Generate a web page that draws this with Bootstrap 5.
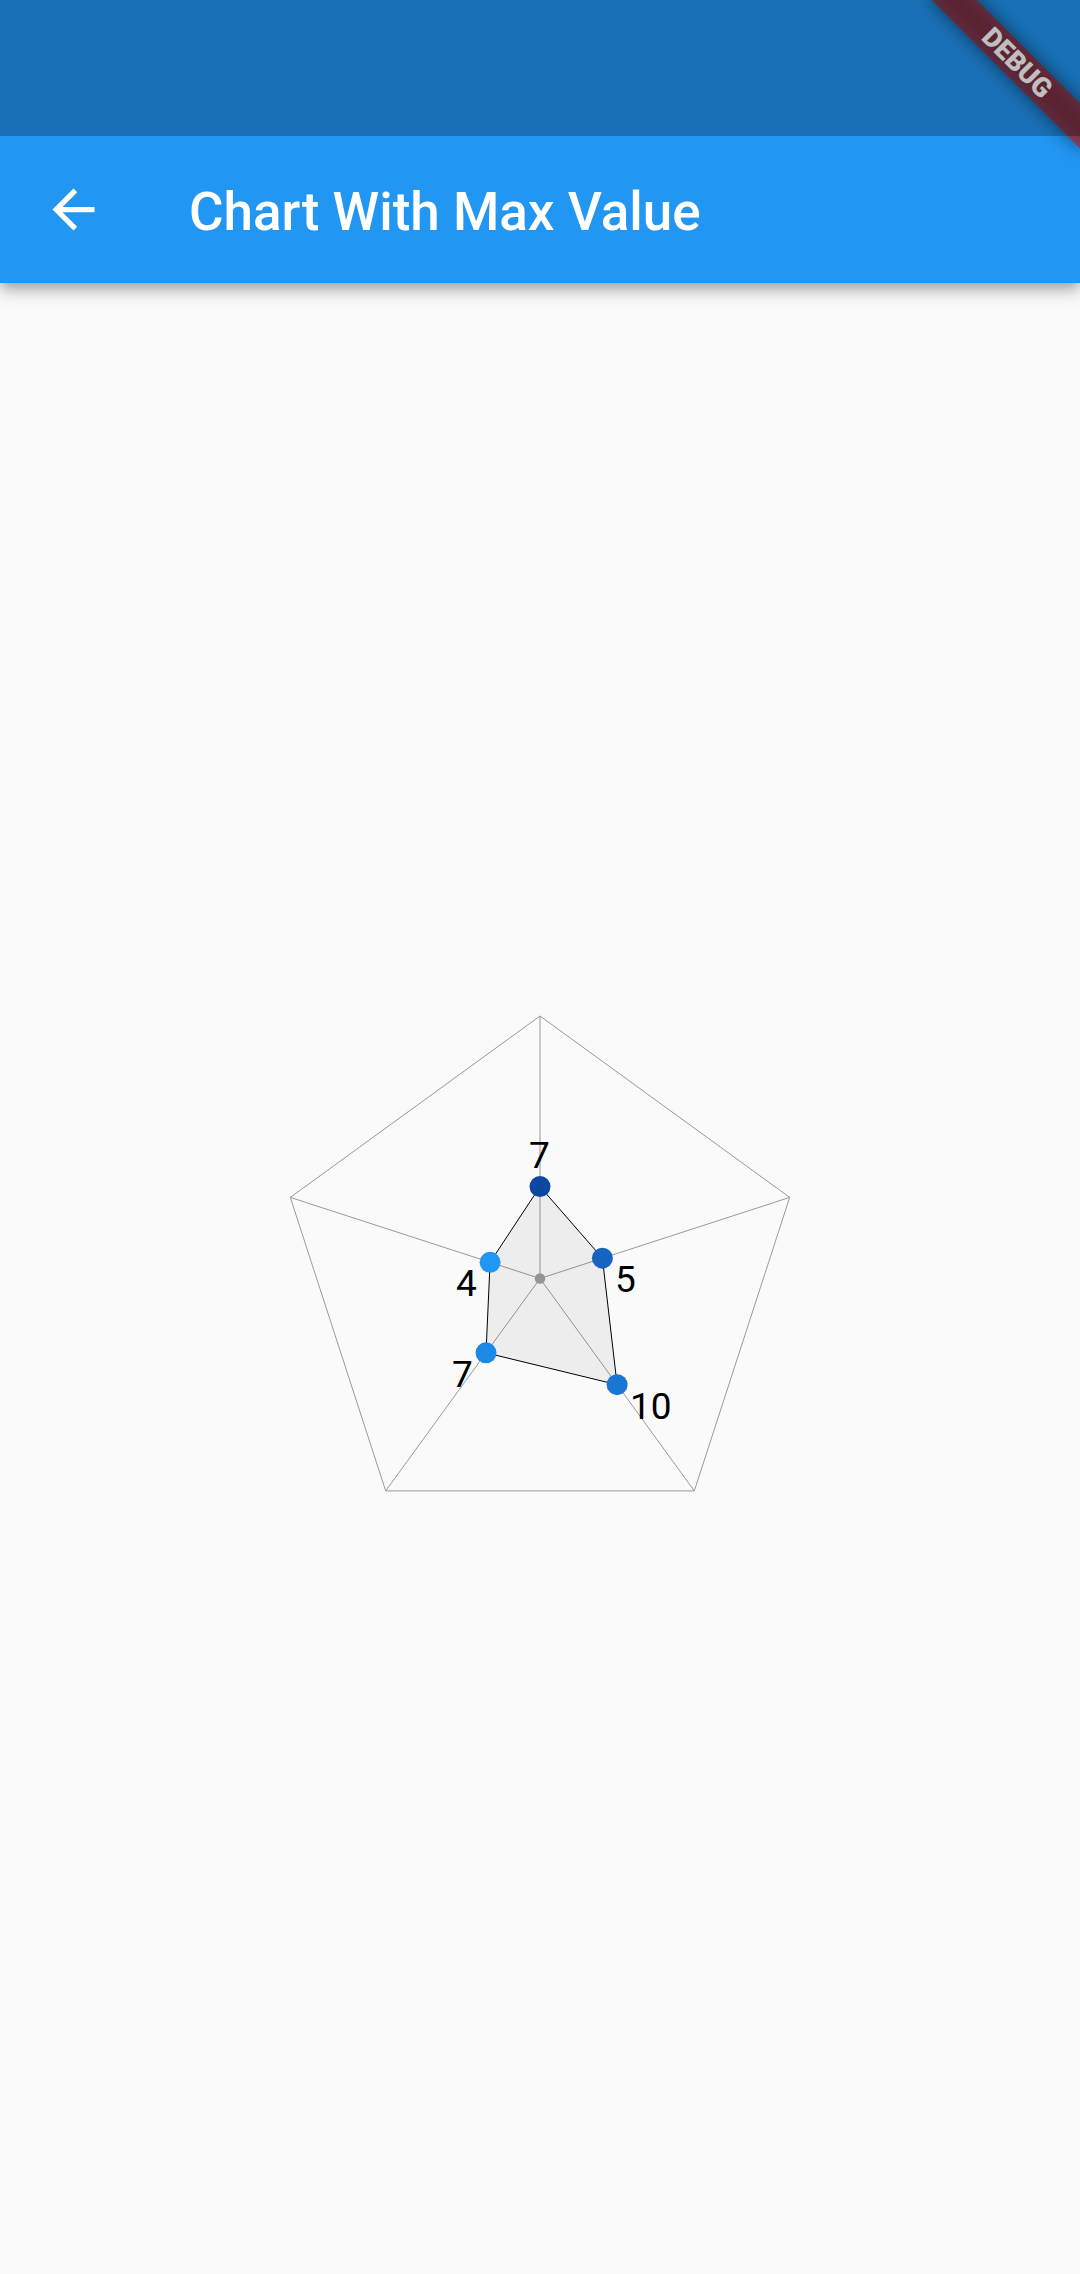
<!DOCTYPE html>
<html lang="en">
<head>
<meta charset="utf-8">
<meta name="viewport" content="width=device-width, initial-scale=1">
<title>Chart With Max Value</title>
<link href="https://cdn.jsdelivr.net/npm/bootstrap@5.3.0/dist/css/bootstrap.min.css" rel="stylesheet">
<style>
  body { background: #fafafa; font-family: Roboto, sans-serif; color: #000; }
  .app-header { background: #2196f3; box-shadow: 0 5px 10px -2px rgba(0,0,0,.2), 0 10px 13px rgba(0,0,0,.14), 0 3px 26px rgba(0,0,0,.1); }
  .status-scrim { height: 136px; background: rgba(0,0,0,.25); z-index: 2; }
  .app-toolbar { height: 147px; padding-left: 42px; gap: 84px; }
  .back-button svg { width: 63px; height: 63px; }
  .app-title { font-size: 53px; font-weight: 500; line-height: 62px; }
  .ribbon-corner { width: 190px; height: 190px; z-index: 1; pointer-events: none; }
  .debug-ribbon {
    left: 100%; width: 212px; height: 32px;
    transform-origin: 0 0; transform: rotate(45deg) translate(-50%, 73px);
    font-size: 27px; font-weight: 900; line-height: 32px;
  }
  .debug-ribbon::before, .debug-ribbon::after { content: ""; position: absolute; inset: 0; }
  .debug-ribbon::before { z-index: -2; background: rgba(0,0,0,.5); filter: blur(9px); }
  .debug-ribbon::after { z-index: -1; background: rgba(183,28,28,.63); }
  .radar-chart { height: 541px; }
  .radar-chart .grid-lines { fill: none; stroke: #999; }
  .radar-chart .data-area { fill: rgba(0,0,0,.05); stroke: #000; }
  .radar-chart text { font-size: 37px; }
</style>
</head>
<body>
<div class="d-flex flex-column min-vh-100 position-relative">
  <header class="app-header">
    <div class="status-scrim position-relative"></div>
    <div class="app-toolbar d-flex align-items-center text-white">
      <button type="button" class="back-button btn p-0 border-0 d-flex text-white" aria-label="Back">
        <svg viewBox="0 0 24 24" fill="currentColor" aria-hidden="true"><path d="M20 11H7.83l5.59-5.59L12 4l-8 8 8 8 1.41-1.41L7.83 13H20v-2z"/></svg>
      </button>
      <h1 class="app-title m-0 pt-1 text-nowrap">Chart With Max Value</h1>
    </div>
  </header>
  <div class="ribbon-corner position-absolute top-0 end-0 overflow-hidden">
    <div class="debug-ribbon position-absolute top-0 text-center text-white">DEBUG</div>
  </div>
  <main class="flex-grow-1 d-flex align-items-center justify-content-center">
    <svg class="radar-chart w-50" viewBox="-270 -270.5 540 541" role="img" aria-label="Radar chart with five values">
      <g class="grid-lines">
        <path d="M0-262.5 249.7-81.1 154.3 212.4-154.3 212.4-249.7-81.1Z"/>
        <path d="M0 0V-262.5M0 0 249.7-81.1M0 0 154.3 212.4M0 0-154.3 212.4M0 0-249.7-81.1"/>
      </g>
      <circle r="5.25" fill="#9e9e9e"/>
      <path class="data-area" d="M0-91.9 62.4-20.3 77.1 106.2-54 74.3-49.9-16.2Z"/>
      <circle cx="0" cy="-91.9" r="10.5" fill="#0d47a1"/>
      <circle cx="62.4" cy="-20.3" r="10.5" fill="#1565c0"/>
      <circle cx="77.1" cy="106.2" r="10.5" fill="#1976d2"/>
      <circle cx="-54" cy="74.3" r="10.5" fill="#1e88e5"/>
      <circle cx="-49.9" cy="-16.2" r="10.5" fill="#2196f3"/>
      <text x="-11" y="-111">7</text>
      <text x="75" y="13">5</text>
      <text x="90" y="140">10</text>
      <text x="-88" y="108">7</text>
      <text x="-84" y="17">4</text>
    </svg>
  </main>
</div>
<script src="https://cdn.jsdelivr.net/npm/bootstrap@5.3.0/dist/js/bootstrap.bundle.min.js"></script>
</body>
</html>
